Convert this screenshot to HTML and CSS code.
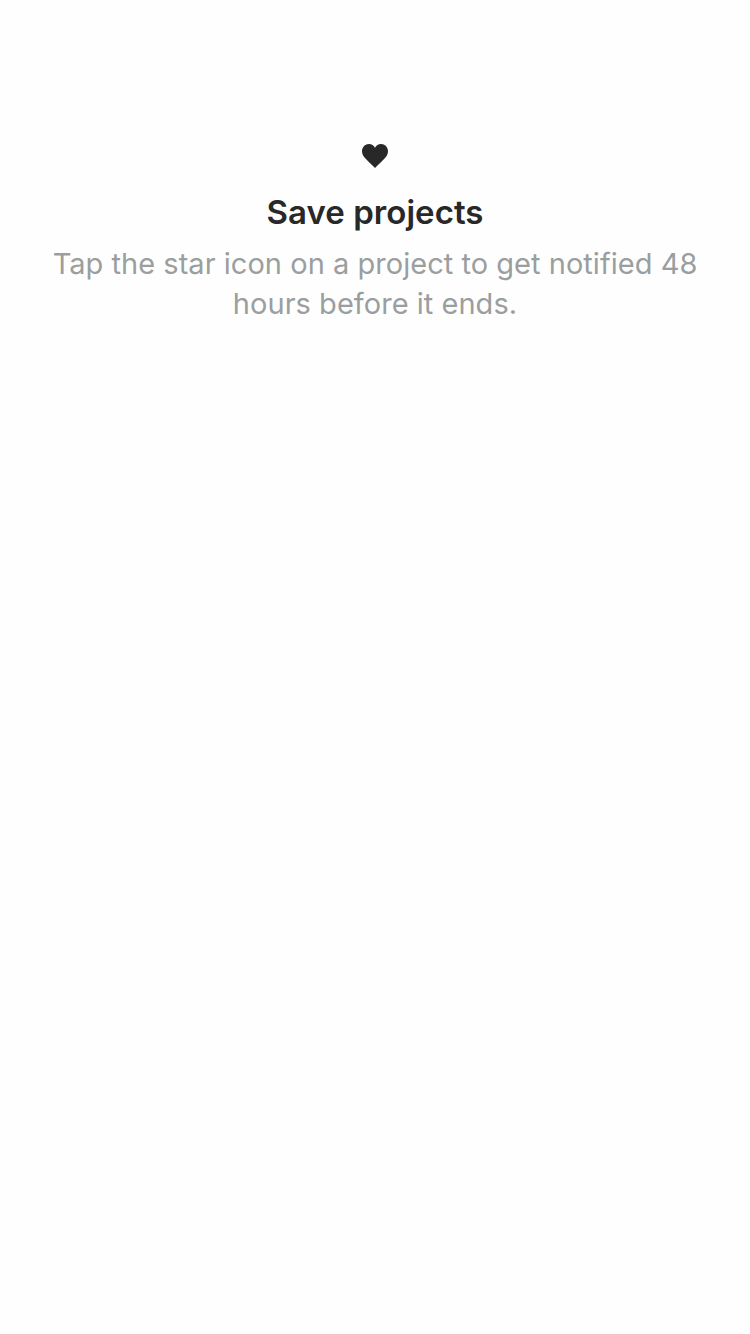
FILE: index.html
```html
<!DOCTYPE html>
<html lang="en">
<head>
<meta charset="utf-8">
<title>Save projects</title>
<link rel="stylesheet" href="styles.css">
</head>
<body>
<main class="empty-state">
<svg class="heart" viewBox="0 0 26 24" aria-hidden="true"><path d="M13 24C10.500 21.200 5.800 17.200 3 14C1.100 11.900 0 9.900 0 7.300C0 3.200 3.100 0 7 0C9.600 0 11.900 1.500 13 3.800C14.100 1.500 16.400 0 19 0C22.900 0 26 3.200 26 7.300C26 9.900 24.900 11.900 23 14C20.200 17.200 15.500 21.200 13 24Z"/></svg>
<h1 class="title">Save projects</h1>
<p class="message"><span class="line">Tap the star icon on a project to get notified 48</span> <span class="line">hours before it ends.</span></p>
</main>
</body>
</html>
```
FILE: styles.css
```css
body {
  margin: 0;
  background: #fefefe;
  font-family: Inter, Roboto, sans-serif;
}
.empty-state {
  min-height: 1334px;
  box-sizing: border-box;
  padding-top: 144px;
  display: flex;
  flex-direction: column;
  align-items: center;
  text-align: center;
}
.heart {
  width: 26px;
  height: 24px;
  fill: #282828;
}
.title {
  margin: 24px 0 0;
  font-size: 33px;
  line-height: 40px;
  font-weight: 580;
  letter-spacing: 0.05px;
  color: #282828;
  white-space: nowrap;
}
.message {
  margin: 12px 0 0;
  font-size: 29px;
  line-height: 40px;
  letter-spacing: 0.03px;
  color: #9b9e9e;
}
.line {
  display: block;
  white-space: nowrap;
}
```
